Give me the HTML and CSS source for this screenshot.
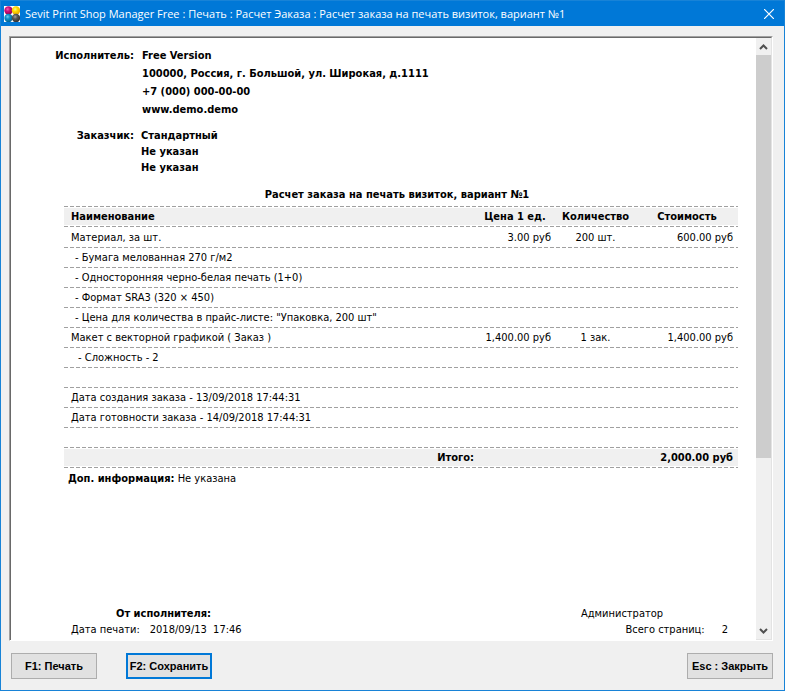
FILE: index.html
```html
<!DOCTYPE html>
<html lang="ru">
<head>
  <meta charset="utf-8">
  <title>Sevit Print Shop Manager Free</title>
  <link rel="stylesheet" href="styles.css">
</head>
<body>
  <div class="window">
    <header class="titlebar">
      <svg class="logo" viewBox="0 0 16 16" aria-hidden="true">
        <defs>
          <radialGradient id="m" cx=".4" cy=".35" r=".65"><stop offset="0" stop-color="#f060b0"/><stop offset=".4" stop-color="#d0107c"/><stop offset="1" stop-color="#90004c"/></radialGradient>
          <radialGradient id="y" cx=".4" cy=".35" r=".65"><stop offset="0" stop-color="#fff890"/><stop offset=".4" stop-color="#ffdc00"/><stop offset="1" stop-color="#e8a400"/></radialGradient>
          <radialGradient id="c" cx=".4" cy=".35" r=".65"><stop offset="0" stop-color="#70d0f0"/><stop offset=".4" stop-color="#1090c8"/><stop offset="1" stop-color="#006090"/></radialGradient>
          <radialGradient id="k" cx=".4" cy=".35" r=".65"><stop offset="0" stop-color="#a0a0a0"/><stop offset=".4" stop-color="#585858"/><stop offset="1" stop-color="#303030"/></radialGradient>
        </defs>
        <rect width="16" height="16" fill="#fff"/>
        <circle cx="4.5" cy="4.5" r="4.2" fill="url(#m)"/>
        <circle cx="12" cy="4.5" r="4.2" fill="url(#y)"/>
        <circle cx="4.5" cy="12" r="4.2" fill="url(#c)"/>
        <circle cx="12" cy="12" r="4.2" fill="url(#k)"/>
      </svg>
      <span class="caption">Sevit Print Shop Manager Free : Печать : Расчет Эаказа : Расчет заказа на печать визиток, вариант №1</span>
      <button type="button" class="close" aria-label="Закрыть окно">
        <svg width="10" height="10" viewBox="0 0 10 10"><path d="M0 0L10 10M10 0L0 10" stroke="#fff" stroke-width="1.2" fill="none"/></svg>
      </button>
    </header>

    <main class="client">
      <div class="viewer">
        <article class="paper">
          <dl class="party">
            <dt>Исполнитель:</dt>
            <dd>Free Version</dd>
            <dd>100000, Россия, г. Большой, ул. Широкая, д.1111</dd>
            <dd>+7 (000) 000-00-00</dd>
            <dd>www.demo.demo</dd>
          </dl>
          <dl class="party customer">
            <dt>Заказчик:</dt>
            <dd>Стандартный</dd>
            <dd>Не указан</dd>
            <dd>Не указан</dd>
          </dl>

          <h1>Расчет заказа на печать визиток, вариант №1</h1>

          <table class="estimate">
            <thead>
              <tr class="band"><th class="name">Наименование</th><th class="price">Цена 1 ед.</th><th class="count">Количество</th><th class="cost">Стоимость</th></tr>
            </thead>
            <tbody>
              <tr class="first"><td>Материал, за шт.</td><td class="price">3.00 руб</td><td class="count">200 шт.</td><td class="cost">600.00 руб</td></tr>
              <tr><td colspan="4" class="detail">- Бумага мелованная 270 г/м2</td></tr>
              <tr><td colspan="4" class="detail">- Односторонняя черно-белая печать (1+0)</td></tr>
              <tr><td colspan="4" class="detail">- Формат SRA3 (320 × 450)</td></tr>
              <tr><td colspan="4" class="detail">- Цена для количества в прайс-листе: "Упаковка, 200 шт"</td></tr>
              <tr><td>Макет с векторной графикой ( Заказ )</td><td class="price">1,400.00 руб</td><td class="count">1 зак.</td><td class="cost">1,400.00 руб</td></tr>
              <tr><td colspan="4" class="option">- Сложность - 2</td></tr>
              <tr><td colspan="4"></td></tr>
              <tr><td colspan="4">Дата создания заказа - 13/09/2018 17:44:31</td></tr>
              <tr><td colspan="4">Дата готовности заказа - 14/09/2018 17:44:31</td></tr>
              <tr><td colspan="4"></td></tr>
            </tbody>
            <tfoot>
              <tr class="band"><th class="total">Итого:</th><td colspan="3" class="cost">2,000.00 руб</td></tr>
            </tfoot>
          </table>
          <p class="note"><b>Доп. информация:</b> Не указана</p>

          <footer class="signature">
            <div>
              <p class="from">От исполнителя:</p>
              <p class="printed"><span>Дата печати:</span><span>2018/09/13&nbsp; 17:46</span></p>
            </div>
            <div class="right">
              <p>Администратор</p>
              <p class="pages"><span>Всего страниц:</span><span>2</span></p>
            </div>
          </footer>
        </article>

        <div class="scrollbar">
          <button type="button" aria-label="Вверх"><svg width="9" height="6" viewBox="0 0 9 6"><path d="M1 5L4.500 1.500L8 5" stroke="#505050" stroke-width="2" fill="none"/></svg></button>
          <div class="track"><div class="thumb"></div></div>
          <button type="button" aria-label="Вниз"><svg width="9" height="6" viewBox="0 0 9 6"><path d="M1 1L4.500 4.500L8 1" stroke="#505050" stroke-width="2" fill="none"/></svg></button>
        </div>
      </div>

      <div class="actions">
        <button type="button" class="button">F1: Печать</button>
        <button type="button" class="button default">F2: Сохранить</button>
        <button type="button" class="button last">Esc : Закрыть</button>
      </div>
    </main>
  </div>
</body>
</html>
```
FILE: styles.css
```css
* {box-sizing: border-box;}

body {margin: 0;
      padding-right: 2px;
      background-color: #ffffff;
      color: #000000;
      font: 11px "DejaVu Sans Condensed", "DejaVu Sans", sans-serif;}

p, dl, dd, h1 {margin: 0;}

button {margin: 0;
        padding: 0;
        border: none;
        font-family: inherit;}

.window {display: flex;
         flex-direction: column;
         min-height: 100vh;
         border: solid #1883d7 1px;
         background-color: #f0f0f0;}

/* title bar */

.titlebar {display: flex;
           align-items: center;
           height: 25px;
           padding: 0 10px 0 3px;
           background-color: #0078d7;
           color: #ffffff;}

.logo {width: 16px;
       height: 16px;
       margin-right: 5px;}

.caption {flex: 1;
          font: 11px "Open Sans", "Noto Sans", sans-serif;
          white-space: nowrap;}

.close {display: flex;
        background: none;}

/* report viewer */

.client {display: flex;
         flex: 1;
         flex-direction: column;
         padding: 10px 11px 11px 8px;}

.viewer {display: flex;
         flex: 1;
         border: solid 1px;
         border-color: #a0a0a0 #ffffff #ffffff #a0a0a0;
         background-color: #ffffff;}

.paper {display: flex;
        flex: 1;
        flex-direction: column;
        padding: 9px 18px 2px 34px;
        border: solid #696969;
        border-width: 1px 0 0 1px;}

.party {display: grid;
        grid-template-columns: 89px 1fr;
        column-gap: 8px;
        font-weight: bold;
        line-height: 18px;}

.party dt {text-align: right;}

.party dd {grid-column: 2;}

.customer {margin-top: 9px;
           column-gap: 7px;
           line-height: 16px;}

h1 {margin-top: 11px;
    margin-left: 11px;
    font-size: 11px;
    line-height: 16px;
    text-align: center;}

.estimate {margin: 3px 0 0 19px;
           padding-top: 1px;
           border-spacing: 0;
           table-layout: fixed;
           background: repeating-linear-gradient(90deg, #a0a0a0 0 4px, transparent 4px 6px) top / 100% 1px no-repeat;}

.estimate tr {height: 20px;
              background: repeating-linear-gradient(90deg, #a0a0a0 0 4px, transparent 4px 6px) bottom / 100% 1px no-repeat;}

.estimate .first {height: 21px;}

.estimate .band {background: repeating-linear-gradient(90deg, #a0a0a0 0 4px, transparent 4px 6px) bottom / 100% 1px no-repeat,
                             linear-gradient(#f0f0f0, #f0f0f0) 0 1px / 100% 17px no-repeat;
                 font-weight: bold;}

.estimate th, .estimate td {padding: 0 0 0 7px;
                            line-height: 18px;
                            text-align: left;
                            white-space: nowrap;}

.estimate .price {width: 80px;
                  padding: 0 4px 0 0;
                  text-align: right;}

.estimate .count {width: 81px;
                  padding: 0;
                  text-align: center;}

.estimate .cost {width: 102px;
                 padding: 0 5px 0 0;
                 text-align: right;}

.estimate thead th {line-height: 20px;}

.estimate thead .price, .estimate thead .cost {padding: 0;
                                               text-align: center;}

.estimate .detail {padding-left: 11px;}

.estimate .option {padding-left: 14px;}

.estimate .total {padding-right: 1px;
                  text-align: right;}

.note {padding-left: 23px;
       line-height: 22px;}

.signature {display: flex;
            justify-content: space-between;
            margin-top: auto;
            padding: 0 10px 0 26px;
            line-height: 16px;}

.from {padding-left: 45px;
       font-weight: bold;}

.printed span + span {margin-left: 10px;}

.right {width: 147px;}

.pages {display: flex;
        justify-content: flex-end;
        gap: 17px;}

.scrollbar {display: flex;
            flex-direction: column;
            width: 16px;
            border: solid #e3e3e3;
            border-width: 0 1px 1px 0;
            border-top: solid #696969 1px;
            background-color: #f0f0f0;}

.scrollbar button {display: flex;
                   align-items: center;
                   justify-content: center;
                   height: 17px;
                   background: none;}

.track {flex: 1;}

.thumb {height: 71%;
        background-color: #cdcdcd;}

/* buttons under the report */

.actions {display: flex;
          gap: 29px;
          margin-top: 12px;
          padding-left: 2px;}

.button {width: 86px;
         height: 26px;
         border: solid #adadad 1px;
         background-color: #e1e1e1;
         color: #000000;
         font: bold 11px "Liberation Sans", Arial, sans-serif;
         white-space: nowrap;}

.default {border: solid #0078d7 2px;}

.last {margin-left: auto;}
```
